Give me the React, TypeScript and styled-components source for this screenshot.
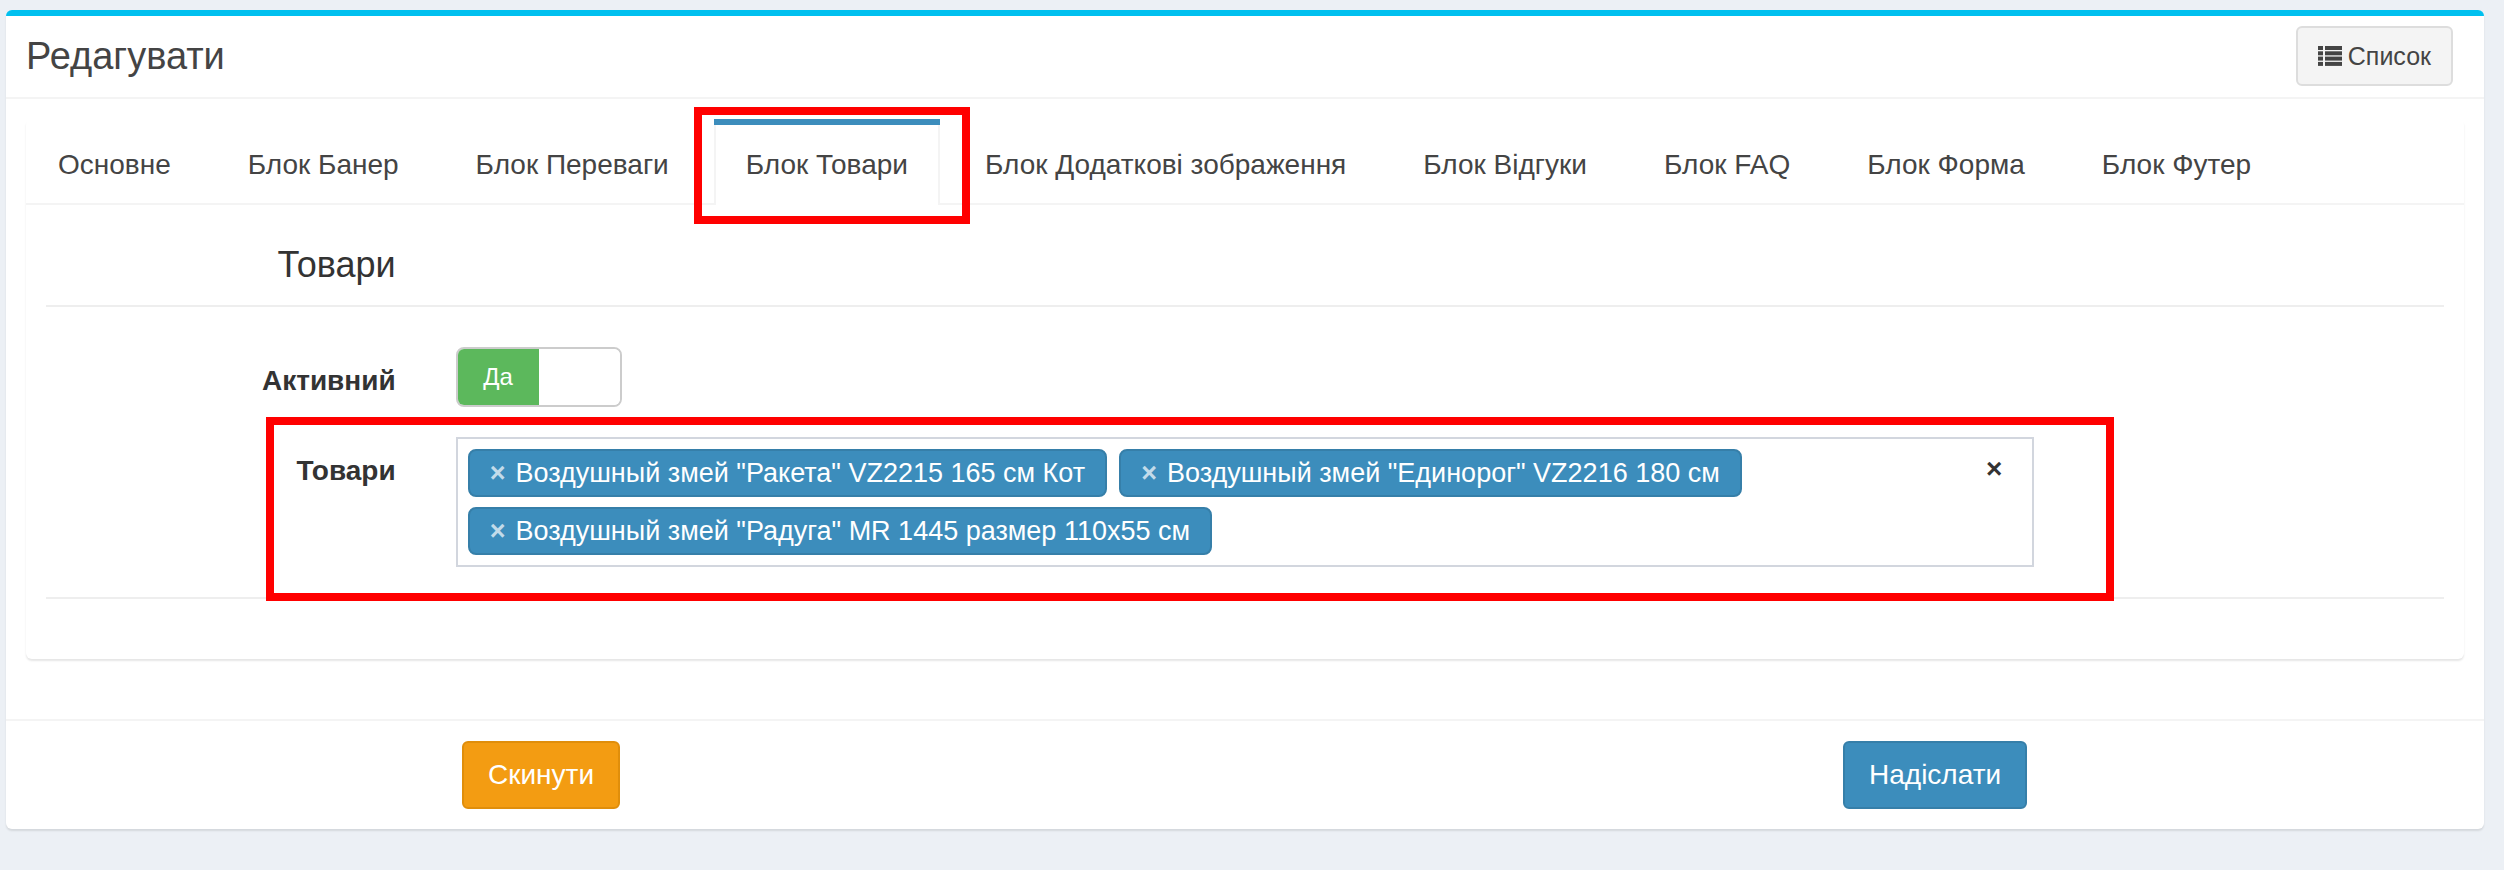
import React from 'react';
import styled, { createGlobalStyle, css } from 'styled-components';

type Product = {
  id: number;
  title: string;
};

const tabs: string[] = [
  'Основне',
  'Блок Банер',
  'Блок Переваги',
  'Блок Товари',
  'Блок Додаткові зображення',
  'Блок Відгуки',
  'Блок FAQ',
  'Блок Форма',
  'Блок Футер'
];

const activeTab = 'Блок Товари';

const products: Product[] = [
  { id: 1, title: 'Воздушный змей "Ракета" VZ2215 165 см Кот' },
  { id: 2, title: 'Воздушный змей "Единорог" VZ2216 180 см' },
  { id: 3, title: 'Воздушный змей "Радуга" MR 1445 размер 110x55 см' }
];

const GlobalStyle = createGlobalStyle`
  * {
    box-sizing: border-box;
  }
  html, body {
    margin: 0;
    padding: 0;
  }
  body {
    background: #ecf0f5;
    font-family: "Liberation Sans", Arial, sans-serif;
    font-size: 28px;
    color: #333;
  }
`;

const Page = styled.div`
  padding: 10px 20px 40px 6px;
`;

const Box = styled.section`
  background: #fff;
  border-top: 6px solid #00c0ef;
  border-radius: 6px;
  box-shadow: 0 2px 2px rgba(0, 0, 0, 0.1);
`;

const BoxHeader = styled.header`
  display: flex;
  align-items: center;
  justify-content: space-between;
  padding: 10px 31px 11px 20px;
  border-bottom: 2px solid #f4f4f4;
`;

const BoxTitle = styled.h3`
  margin: 0;
  font-size: 38px;
  font-weight: 400;
  line-height: 40px;
  color: #444;
`;

const ToolButton = styled.button`
  display: inline-flex;
  align-items: center;
  gap: 6px;
  height: 60px;
  padding: 0 20px;
  font-family: inherit;
  font-size: 25px;
  color: #444;
  background: #f4f4f4;
  border: 2px solid #ddd;
  border-radius: 6px;
`;

const BoxBody = styled.div`
  padding: 20px;
`;

const TabsCard = styled.div`
  margin-bottom: 40px;
  background: #fff;
  border-radius: 6px;
  box-shadow: 0 2px 2px rgba(0, 0, 0, 0.1);
`;

const TabBar = styled.ul`
  display: flex;
  margin: 0;
  padding: 0;
  list-style: none;
  border-bottom: 2px solid #f4f4f4;
`;

const TabItem = styled.li<{ $active?: boolean }>`
  position: relative;
  margin: 0 13px -2px 0;
  border-top: 6px solid ${p => (p.$active ? '#3c8dbc' : 'transparent')};
`;

const TabLink = styled.a<{ $active?: boolean }>`
  display: block;
  padding: 20px 30px;
  font-size: 28px;
  line-height: 40px;
  color: #444;
  text-decoration: none;
  white-space: nowrap;
  border-left: 2px solid transparent;
  border-right: 2px solid transparent;
  ${p =>
    p.$active &&
    css`
      background: #fff;
      border-left-color: #f4f4f4;
      border-right-color: #f4f4f4;
    `}
`;

// red frame drawn over a part of the form
const Highlight = styled.span<{ $top: number; $right: number; $bottom: number; $left: number }>`
  position: absolute;
  top: ${p => p.$top}px;
  right: ${p => p.$right}px;
  bottom: ${p => p.$bottom}px;
  left: ${p => p.$left}px;
  border: 8px solid #ff0000;
  pointer-events: none;
`;

const TabContent = styled.div`
  padding: 20px 20px 60px;
`;

const FormRow = styled.div<{ $gap?: number }>`
  position: relative;
  display: grid;
  grid-template-columns: minmax(0, 2fr) minmax(0, 8fr) minmax(0, 2fr);
  margin: 0 -30px ${p => p.$gap ?? 30}px;

  > * {
    padding: 0 30px;
  }
`;

const SectionTitle = styled.h4`
  margin: 20px 0;
  font-size: 36px;
  font-weight: 400;
  line-height: 40px;
  text-align: right;
  color: #333;
`;

const Divider = styled.hr<{ $after?: number }>`
  margin: 0 0 ${p => p.$after ?? 0}px;
  border: 0;
  border-top: 2px solid #eee;
`;

const FieldLabel = styled.label`
  padding-top: 14px !important;
  font-weight: 700;
  line-height: 40px;
  text-align: right;
  color: #333;
`;

const Field = styled.div``;

const Switch = styled.div`
  display: flex;
  width: 166px;
  height: 60px;
  border: 2px solid #ccc;
  border-radius: 8px;
  overflow: hidden;
`;

const SwitchHalf = styled.span<{ $on?: boolean }>`
  flex: 1;
  display: flex;
  align-items: center;
  justify-content: center;
  font-size: 24px;
  color: #fff;
  background: ${p => (p.$on ? '#5cb85c' : '#fff')};
`;

const MultiSelect = styled.div`
  display: grid;
  grid-template-columns: 1fr auto;
  padding: 0 10px 10px;
  background: #fff;
  border: 2px solid #d2d6de;
`;

const TagList = styled.ul`
  display: flex;
  flex-wrap: wrap;
  margin: 0;
  padding: 0;
  list-style: none;
`;

const Tag = styled.li`
  margin: 10px 12px 0 0;
  padding: 2px 20px;
  font-size: 27px;
  line-height: 40px;
  white-space: nowrap;
  color: #fff;
  background: #3c8dbc;
  border: 2px solid #367fa9;
  border-radius: 8px;
`;

const TagRemove = styled.span`
  margin-right: 10px;
  font-weight: 700;
  color: rgba(255, 255, 255, 0.7);
`;

const ClearAll = styled.span`
  margin: 10px 20px 0 0;
  font-weight: 700;
  line-height: 40px;
  color: #333;
`;

const BoxFooter = styled.footer`
  display: grid;
  grid-template-columns: 436px 1381px auto;
  padding: 20px;
  border-top: 2px solid #f4f4f4;
`;

const Button = styled.button<{ $variant: 'warning' | 'primary' }>`
  grid-column: ${p => (p.$variant === 'warning' ? 2 : 3)};
  justify-self: start;
  padding: 12px 24px;
  font-family: inherit;
  font-size: 28px;
  line-height: 40px;
  color: #fff;
  border-radius: 6px;
  border: 2px solid ${p => (p.$variant === 'warning' ? '#e08e0b' : '#367fa9')};
  background: ${p => (p.$variant === 'warning' ? '#f39c12' : '#3c8dbc')};
`;

const ListIcon = () => (
  <svg width="24" height="20" viewBox="0 0 24 20" fill="#444">
    {[0, 5.3, 10.6, 15.9].map(y => (
      <g key={y}>
        <rect x="0" y={y} width="5" height="4" />
        <rect x="7" y={y} width="17" height="4" />
      </g>
    ))}
  </svg>
);

export default function App() {
  return (
    <>
      <GlobalStyle />
      <Page>
        <Box>
          <BoxHeader>
            <BoxTitle>Редагувати</BoxTitle>
            <ToolButton>
              <ListIcon />
              Список
            </ToolButton>
          </BoxHeader>

          <BoxBody>
            <TabsCard>
              <TabBar>
                {tabs.map(tab => {
                  const active = tab === activeTab;
                  return (
                    <TabItem key={tab} $active={active}>
                      <TabLink $active={active}>{tab}</TabLink>
                      {active && <Highlight $top={-18} $right={-30} $bottom={-19} $left={-20} />}
                    </TabItem>
                  );
                })}
              </TabBar>

              <TabContent>
                <FormRow $gap={0}>
                  <SectionTitle>Товари</SectionTitle>
                </FormRow>
                <Divider $after={40} />

                <FormRow>
                  <FieldLabel>Активний</FieldLabel>
                  <Field>
                    <Switch>
                      <SwitchHalf $on>Да</SwitchHalf>
                      <SwitchHalf />
                    </Switch>
                  </Field>
                </FormRow>

                <FormRow>
                  <FieldLabel>Товари</FieldLabel>
                  <Field>
                    <MultiSelect>
                      <TagList>
                        {products.map(p => (
                          <Tag key={p.id}>
                            <TagRemove>×</TagRemove>
                            {p.title}
                          </Tag>
                        ))}
                      </TagList>
                      <ClearAll>×</ClearAll>
                    </MultiSelect>
                  </Field>
                  <Highlight $top={-20} $right={360} $bottom={-34} $left={250} />
                </FormRow>
                <Divider />
              </TabContent>
            </TabsCard>
          </BoxBody>

          <BoxFooter>
            <Button $variant="warning">Скинути</Button>
            <Button $variant="primary">Надіслати</Button>
          </BoxFooter>
        </Box>
      </Page>
    </>
  );
}
